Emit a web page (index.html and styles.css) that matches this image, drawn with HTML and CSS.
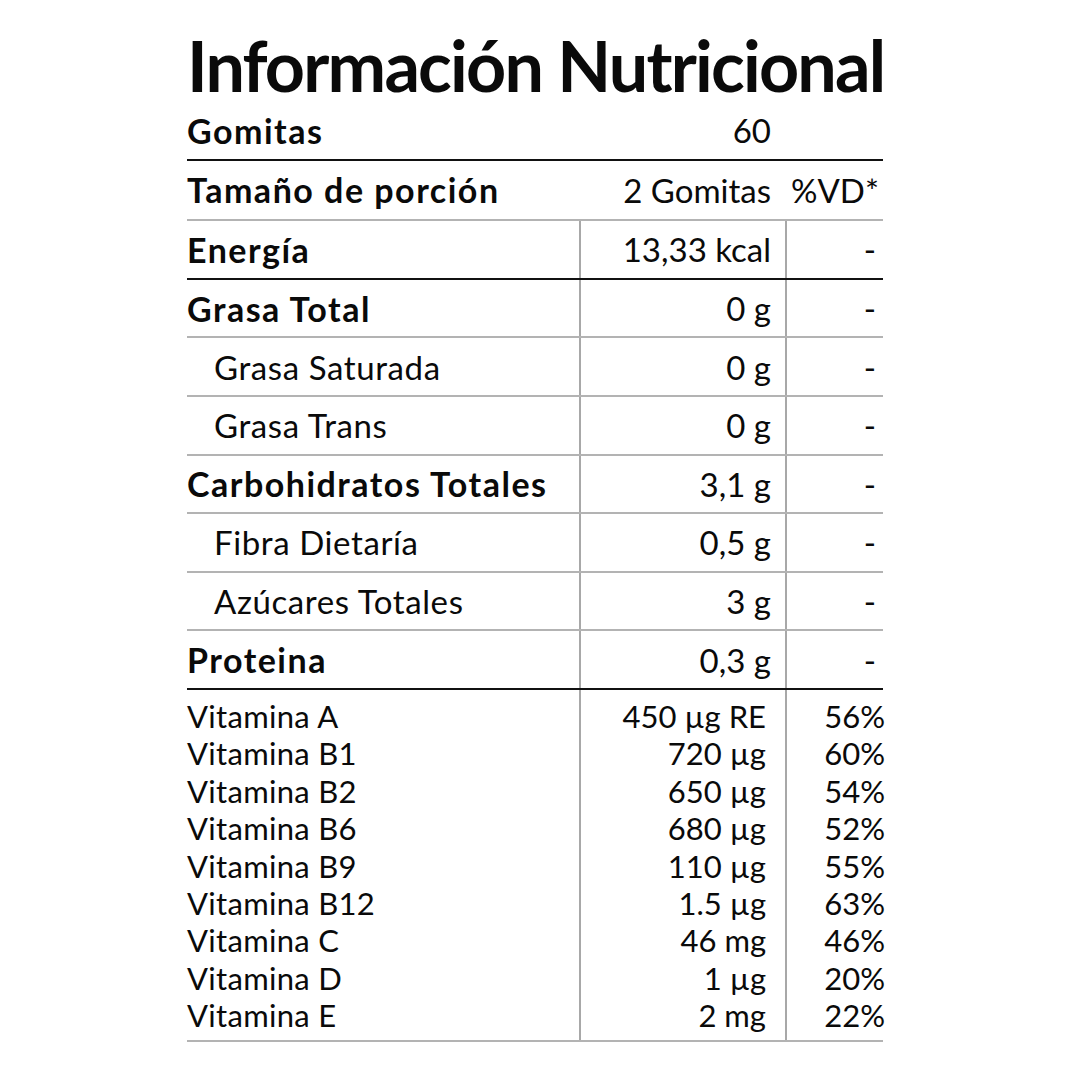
FILE: index.html
```html
<!DOCTYPE html>
<html lang="es">
<head>
<meta charset="utf-8">
<title>Información Nutricional</title>
<link rel="stylesheet" href="styles.css">
</head>
<body>
<main class="panel">
  <h1 class="title">Información Nutricional</h1>
  <div class="head-row head-first">
    <div class="label bold">Gomitas</div>
    <div class="amount">60</div>
    <div class="pct"></div>
  </div>
  <div class="head-row">
    <div class="label bold">Tamaño de porción</div>
    <div class="amount">2 Gomitas</div>
    <div class="pct pct-head">%VD*</div>
  </div>
  <div class="row strong">
    <div class="label bold">Energía</div>
    <div class="amount cell">13,33 kcal</div>
    <div class="pct cell">-</div>
  </div>
  <div class="row">
    <div class="label bold">Grasa Total</div>
    <div class="amount cell">0 g</div>
    <div class="pct cell">-</div>
  </div>
  <div class="row">
    <div class="label sub">Grasa Saturada</div>
    <div class="amount cell">0 g</div>
    <div class="pct cell">-</div>
  </div>
  <div class="row">
    <div class="label sub">Grasa Trans</div>
    <div class="amount cell">0 g</div>
    <div class="pct cell">-</div>
  </div>
  <div class="row">
    <div class="label bold">Carbohidratos Totales</div>
    <div class="amount cell">3,1 g</div>
    <div class="pct cell">-</div>
  </div>
  <div class="row">
    <div class="label sub">Fibra Dietaría</div>
    <div class="amount cell">0,5 g</div>
    <div class="pct cell">-</div>
  </div>
  <div class="row">
    <div class="label sub">Azúcares Totales</div>
    <div class="amount cell">3 g</div>
    <div class="pct cell">-</div>
  </div>
  <div class="row strong">
    <div class="label bold">Proteina</div>
    <div class="amount cell">0,3 g</div>
    <div class="pct cell">-</div>
  </div>
  <div class="vitamins">
    <div class="vcol vlabels">
      <div>Vitamina A</div>
      <div>Vitamina B1</div>
      <div>Vitamina B2</div>
      <div>Vitamina B6</div>
      <div>Vitamina B9</div>
      <div>Vitamina B12</div>
      <div>Vitamina C</div>
      <div>Vitamina D</div>
      <div>Vitamina E</div>
    </div>
    <div class="vcol vamounts">
      <div>450 µg RE</div>
      <div>720 µg</div>
      <div>650 µg</div>
      <div>680 µg</div>
      <div>110 µg</div>
      <div>1.5 µg</div>
      <div>46 mg</div>
      <div>1 µg</div>
      <div>2 mg</div>
    </div>
    <div class="vcol vpcts">
      <div>56%</div>
      <div>60%</div>
      <div>54%</div>
      <div>52%</div>
      <div>55%</div>
      <div>63%</div>
      <div>46%</div>
      <div>20%</div>
      <div>22%</div>
    </div>
  </div>
</main>
</body>
</html>
```

FILE: styles.css
```css
* { box-sizing: border-box; }
html, body { margin: 0; padding: 0; background: #ffffff; }
body {
  font-family: "Lato", "Liberation Sans", sans-serif;
  color: #0a0a0a;
}
.panel {
  width: 696px;
  margin: 30px 0 0 187px;
}
.title {
  margin: 0;
  height: 72px;
  font-size: 70px;
  line-height: 70px;
  font-weight: 700;
  letter-spacing: -1.8px;
  white-space: nowrap;
}
.head-row, .row {
  display: grid;
  grid-template-columns: 392px 206px 98px;
  height: 58.6px;
  align-items: stretch;
}
.head-first { border-bottom: 2px solid #111; }
.row { border-top: 2px solid #b3b3b3; }
.row.strong + .row, .row.strong + .vitamins { border-top-color: #111; }
.label, .amount, .pct {
  display: flex;
  align-items: center;
  font-size: 33px;
  font-weight: 400;
  white-space: nowrap;
}
.bold { font-weight: 700; font-size: 34px; letter-spacing: 1.5px; }
.sub { padding-left: 27px; letter-spacing: 0.6px; }
.amount { justify-content: flex-end; padding-right: 14px; }
.pct { justify-content: flex-end; padding-right: 7px; }
.pct-head { padding-right: 4px; }
.cell { border-left: 2px solid #a8a8a8; }
.vitamins {
  display: grid;
  grid-template-columns: 392px 206px 98px;
  border-top: 2px solid #111;
  border-bottom: 2px solid #b3b3b3;
}
.vcol {
  padding: 8px 0 5px;
  font-size: 31px;
  font-weight: 400;
  line-height: 37.4px;
  white-space: nowrap;
}
.vlabels { letter-spacing: 0.3px; }
.vamounts { border-left: 2px solid #a8a8a8; text-align: right; padding-right: 19px; }
.vpcts { border-left: 2px solid #a8a8a8; text-align: right; padding-right: 0; margin-right: -2px; }
```
